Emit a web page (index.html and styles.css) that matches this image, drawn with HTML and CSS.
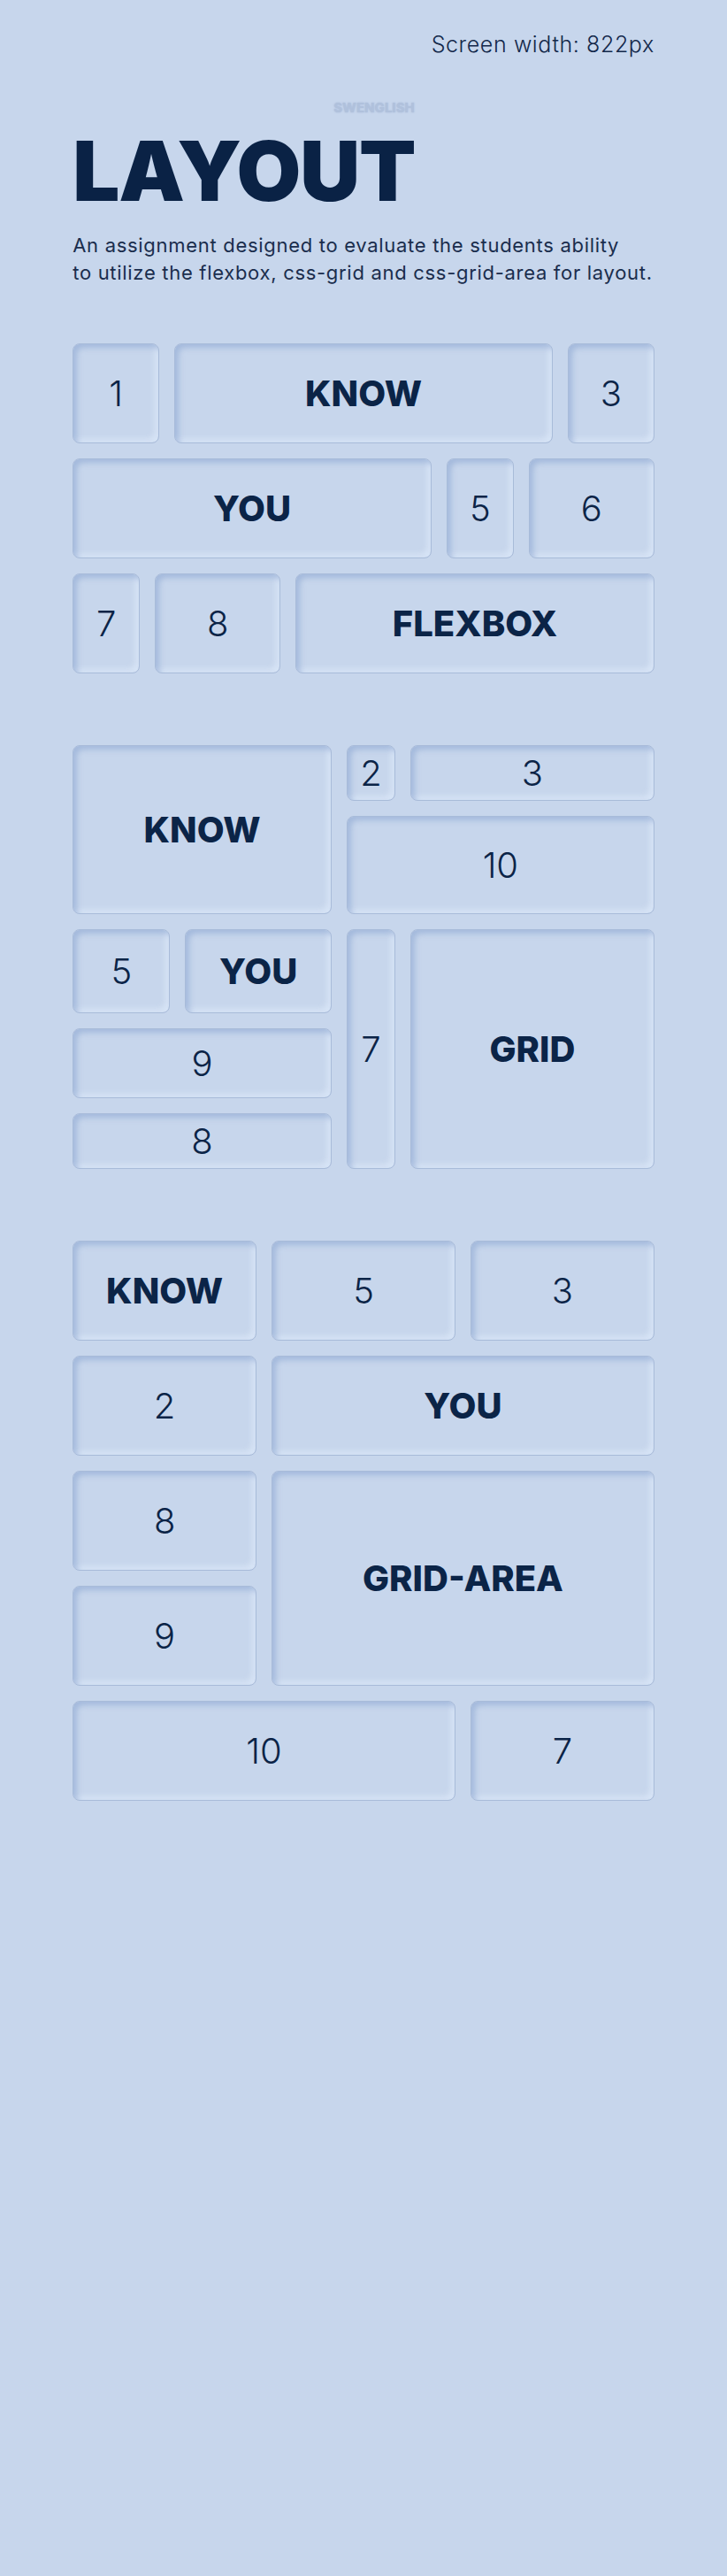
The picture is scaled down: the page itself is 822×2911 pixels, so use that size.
FILE: index.html
```html
<!DOCTYPE html>
<html lang="en">
<head>
<meta charset="utf-8">
<title>Layout</title>
<link rel="stylesheet" href="styles.css">
</head>
<body>
<div class="page">
  <header class="topbar">
    <p class="screen-width">Screen width: 822px</p>
  </header>
  <main class="wrap">
    <p class="brand">SWENGLISH</p>
    <h1 class="title">LAYOUT</h1>
    <p class="lead">An assignment designed to evaluate the students ability<br>to utilize the flexbox, css-grid and css-grid-area for layout.</p>

    <section class="flex-demo">
      <div class="flex-row">
        <div class="box w98">1</div>
        <div class="box grow word">KNOW</div>
        <div class="box w98">3</div>
      </div>
      <div class="flex-row">
        <div class="box grow word">YOU</div>
        <div class="box w76">5</div>
        <div class="box w142">6</div>
      </div>
      <div class="flex-row">
        <div class="box w76">7</div>
        <div class="box w142">8</div>
        <div class="box grow word">FLEXBOX</div>
      </div>
    </section>

    <section class="grid-demo">
      <div class="box word g-know">KNOW</div>
      <div class="box g-2">2</div>
      <div class="box g-3">3</div>
      <div class="box g-10">10</div>
      <div class="box g-5">5</div>
      <div class="box word g-you">YOU</div>
      <div class="box g-9">9</div>
      <div class="box g-8">8</div>
      <div class="box g-7">7</div>
      <div class="box word g-grid">GRID</div>
    </section>

    <section class="area-demo">
      <div class="box word a-know">KNOW</div>
      <div class="box a-5">5</div>
      <div class="box a-3">3</div>
      <div class="box a-2">2</div>
      <div class="box word a-you">YOU</div>
      <div class="box a-8">8</div>
      <div class="box word a-ga">GRID-AREA</div>
      <div class="box a-9">9</div>
      <div class="box a-10">10</div>
      <div class="box a-7">7</div>
    </section>
  </main>
</div>
</body>
</html>
```

FILE: styles.css
```css
* { box-sizing: border-box; }

html, body {
  margin: 0;
  padding: 0;
  background: #c7d6ec;
}

body {
  font-family: "Inter", "Noto Sans", sans-serif;
  color: #0b2447;
}

.page {
  min-height: 2911px;
}

.topbar {
  width: 80%;
  margin: 0 auto;
  padding-top: 35px;
  display: flex;
  justify-content: flex-end;
}

.screen-width {
  margin: 0;
  font-size: 25px;
  line-height: 30px;
  font-weight: 300;
  letter-spacing: 0.6px;
  color: #13284a;
}

.wrap {
  width: 80%;
  margin: 0 auto;
}

.brand {
  margin: 47px 0 0 24px;
  text-align: center;
  font-size: 15px;
  line-height: 20px;
  font-weight: 800;
  color: #b0c1dc;
  text-shadow: 0 0 2px rgba(160, 180, 215, 0.8);
}

.title {
  margin: 14px 0 0 0;
  font-size: 94px;
  line-height: 94px;
  font-weight: 900;
  letter-spacing: -1px;
  color: #0a2245;
}

.lead {
  margin: 22px 0 0 0;
  font-size: 22px;
  line-height: 31px;
  font-weight: 400;
  letter-spacing: 0.7px;
  white-space: nowrap;
  color: #1a2d4d;
}

.box {
  display: flex;
  align-items: center;
  justify-content: center;
  background: #c7d6ec;
  border: 1px solid #a8bbd9;
  border-radius: 8px;
  box-shadow:
    inset 4px 4px 6px rgba(135, 162, 208, 0.55),
    inset -4px -4px 6px rgba(222, 233, 250, 0.75);
  font-size: 40px;
  font-weight: 300;
  color: #0b2447;
}

.box.word {
  font-weight: 800;
}

/* Flexbox section */
.flex-demo {
  margin-top: 64px;
  display: flex;
  flex-direction: column;
  gap: 17px;
}

.flex-row {
  display: flex;
  gap: 17px;
  height: 113px;
}

.grow { flex: 1; }
.w98 { flex: 0 0 98px; }
.w76 { flex: 0 0 76px; }
.w142 { flex: 0 0 142px; }

/* Grid section */
.grid-demo {
  margin-top: 81px;
  display: grid;
  grid-template-columns: 1fr 1.5fr 0.5fr 2.5fr;
  grid-template-rows: 63px 111px 95px 79px 63px;
  gap: 17px;
}

.g-know { grid-column: 1 / 3; grid-row: 1 / 3; }
.g-2 { grid-column: 3; grid-row: 1; }
.g-3 { grid-column: 4; grid-row: 1; }
.g-10 { grid-column: 3 / 5; grid-row: 2; }
.g-5 { grid-column: 1; grid-row: 3; }
.g-you { grid-column: 2; grid-row: 3; }
.g-9 { grid-column: 1 / 3; grid-row: 4; }
.g-8 { grid-column: 1 / 3; grid-row: 5; }
.g-7 { grid-column: 3; grid-row: 3 / 6; }
.g-grid { grid-column: 4; grid-row: 3 / 6; }

/* Grid-area section */
.area-demo {
  margin-top: 81px;
  display: grid;
  grid-template-columns: 1fr 1fr 1fr;
  grid-template-rows: repeat(5, 113px);
  gap: 17px;
  grid-template-areas:
    "know five three"
    "two you you"
    "eight ga ga"
    "nine ga ga"
    "ten ten seven";
}

.a-know { grid-area: know; }
.a-5 { grid-area: five; }
.a-3 { grid-area: three; }
.a-2 { grid-area: two; }
.a-you { grid-area: you; }
.a-8 { grid-area: eight; }
.a-ga { grid-area: ga; }
.a-9 { grid-area: nine; }
.a-10 { grid-area: ten; }
.a-7 { grid-area: seven; }
```
